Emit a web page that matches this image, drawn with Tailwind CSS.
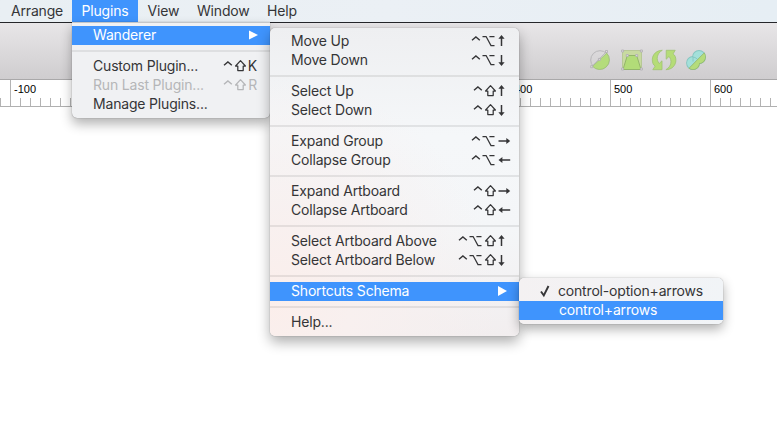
<!DOCTYPE html>
<html lang="en">
<head>
<meta charset="utf-8">
<title>Plugins menu</title>
<script src="https://cdn.jsdelivr.net/npm/@tailwindcss/browser@4"></script>
</head>
<body class="w-[777px] h-[423px] overflow-hidden bg-white relative font-[Inter,sans-serif] text-[14px] tracking-[-0.18px] leading-[17px] text-[#353537]">
<svg width="0" height="0" class="absolute">
  <defs>
    <g id="ctrl" fill="none" stroke="currentColor" stroke-width="1.4"><path d="M1 8.300 4.900 4.900 8.800 8.300"/></g>
    <g id="opt" fill="none" stroke="currentColor" stroke-width="1.25"><path d="M.5 4.500H4.100L9 13.500H12.500M7.400 4.500H12.500"/></g>
    <g id="shift" fill="none" stroke="currentColor" stroke-width="1.25" stroke-linejoin="round"><path d="M5.500 3.700.6 9H2.800V13.500H8.200V9H10.400Z"/></g>
    <g id="up"><path d="M3.500 14V5" fill="none" stroke="currentColor" stroke-width="1.500"/><path d="M3.500 3 6.600 6.800H.4Z" fill="currentColor"/></g>
    <g id="down"><path d="M3.500 4V13" fill="none" stroke="currentColor" stroke-width="1.500"/><path d="M3.500 15 6.600 11.200H.4Z" fill="currentColor"/></g>
    <g id="right"><path d="M0 9H10" fill="none" stroke="currentColor" stroke-width="1.500"/><path d="M11.700 9 7.800 6V12Z" fill="currentColor"/></g>
    <g id="left"><path d="M1.500 9H11.700" fill="none" stroke="currentColor" stroke-width="1.500"/><path d="M0 9 3.900 6V12Z" fill="currentColor"/></g>
  </defs>
</svg>

<div class="flex flex-col">
  <header class="h-[23px] flex bg-linear-to-r from-[#e9eff3] via-[#ebf0f5] to-[#e6eef4] border-b border-[#25262a] leading-[22px]">
    <span class="w-[72px] pl-[11px]">Arrange</span>
    <span class="w-[66px] pl-[9.5px] bg-[#3f94fd] text-white">Plugins</span>
    <span class="w-[59px] pl-[9.5px]">View</span>
    <span class="w-[70px]">Window</span>
    <span>Help</span>
  </header>
  <div class="h-[57px] bg-linear-to-b from-[#e8e6e8] to-[#cfcdcf] border-b border-[#a9a8a9] flex items-start pl-[589px] pt-[26px] gap-[9px]">
    <!-- Edit -->
    <svg width="22" height="22" viewBox="0 0 22 22"><circle cx="11" cy="11" r="9.300" fill="none" stroke="#b8b7ba"/><path d="M3.500 17.300 17.800 4.200A9.500 9.500 0 1 1 3.500 17.300Z" fill="#b4dc7b" stroke="#9cc072" stroke-width=".8"/><path d="M2.700 17.700 17.300 2.800" stroke="#b4b3b8" stroke-width=".9"/><g fill="#e2e0e2" stroke="#aeacb1" stroke-width=".8"><path d="M1.700 16.700h2v2h-2zM16.500 1.500h2v2h-2zM9.400 9.400h2v2h-2z"/></g></svg>
    <!-- Transform -->
    <svg width="24" height="22" viewBox="0 0 24 22"><path d="M2.500 1.500H21.500V20.500H2.500Z" fill="#c8daa0" stroke="#b4c692" stroke-width=".9"/><path d="M3 20.500 7.300 6.500H16.700L21 20.500Z" fill="#b2dc78" stroke="#8fb167" stroke-width=".9"/><g fill="#e2e0e2" stroke="#aeacb1" stroke-width=".8"><path d="M1.600 1h2v2h-2zM20.400 1h2v2h-2zM1.600 19h2v2h-2zM20.400 19h2v2h-2zM6.300 5.500h2v2h-2zM15.700 5.500h2v2h-2z"/></g></svg>
    <!-- Rotate -->
    <svg width="26" height="22" viewBox="0 0 26 22" class="-ml-[2px]" fill="#b5dc77" stroke="#a0c272" stroke-width=".8" stroke-linejoin="round"><path d="M11.300 1.300C5.500 1.300 1.300 5.500 1.300 10.800c0 3 1 5 2.800 6.400L1.800 20.700H11V11.800L8.200 14.500C5 11 5.500 4.500 11.300 1.300Z"/><path d="M14.900 20.700C20.700 20.700 24.900 16.500 24.900 11.200c0-3-1-5-2.800-6.400L24.200 1.300H15.200V10.200L18 7.500C21.200 11 20.700 17.500 14.900 20.700Z"/></svg>
    <!-- Mask -->
    <svg width="22" height="22" viewBox="0 0 22 22" class="-ml-[1px]">
      <clipPath id="lower"><path d="M2 21.300 22 1V22H2Z"/></clipPath>
      <g fill="#84c6c1"><circle cx="14" cy="8" r="6.900"/><circle cx="8" cy="14" r="6.900"/></g>
      <g fill="#a3e0da"><circle cx="14" cy="8" r="6"/><circle cx="8" cy="14" r="6"/></g>
      <path d="M7.600 8A6.500 6.500 0 0 1 14 14.400" fill="none" stroke="#84c6c1" stroke-width=".9"/>
      <path d="M8 12.500V7.700" fill="none" stroke="#84c6c1" stroke-width=".9"/>
      <g clip-path="url(#lower)"><g fill="#94b86c"><circle cx="14" cy="8" r="6.900"/><circle cx="8" cy="14" r="6.900"/></g><g fill="#b4dc7b"><circle cx="14" cy="8" r="6.200"/><circle cx="8" cy="14" r="6.200"/></g></g>
      <path d="M4 19.300 19.300 3.800" stroke="#94b87c" stroke-width=".8"/>
    </svg>
  </div>
  <div class="h-[27px] border-b border-[#b0b0b0] bg-white overflow-hidden font-['Liberation_Sans',sans-serif] text-[11px] tracking-normal leading-[19px] text-black">
    <svg width="777" height="26" class="block" shape-rendering="crispEdges">
      <defs>
        <pattern id="minor" width="10" height="26" patternUnits="userSpaceOnUse"><path d="M0 18h1v8H0z" fill="#b3b3b3"/></pattern>
        <pattern id="major" x="10" width="100" height="26" patternUnits="userSpaceOnUse"><path d="M0 0h1v26H0z" fill="#b3b3b3"/></pattern>
      </defs>
      <rect width="777" height="26" fill="url(#minor)"/><rect width="777" height="26" fill="url(#major)"/>
      <g fill="#000"><text x="14" y="13">-100</text><text x="514" y="13">400</text><text x="614" y="13">500</text><text x="714" y="13">600</text></g>
    </svg>
  </div>
</div>

<!-- Plugins menu -->
<nav class="absolute left-[72px] top-[22px] w-[198px] h-[96px] pt-[4px] rounded-b-[5px] bg-[#f0f1f3] border-t border-[#c4c6c9] shadow-[0_0_1px_rgba(0,0,0,.5),0_6px_12px_rgba(0,0,0,.3)]">
  <div class="-mt-px h-[19px] pb-[2px] bg-[#3f94fd] text-white flex items-center pl-[21px] pr-[12px] justify-between"><span>Wanderer</span><svg width="9" height="10"><path d="M0 .5 9 5 0 9.500Z" fill="#fff"/></svg></div>
  <div class="h-[12px] pt-[5px]"><div class="h-[2px] bg-[#dedfe1]"></div></div>
  <div class="h-[19px] flex pl-[21px] pr-[13px] justify-between"><span>Custom Plugin...</span><span class="flex"><svg width="25" height="19"><use href="#ctrl"/><use href="#shift" x="12"/></svg>K</span></div>
  <div class="h-[19px] flex pl-[21px] pr-[13px] justify-between text-[#b5b6b8]"><span>Run Last Plugin...</span><span class="flex"><svg width="25" height="19"><use href="#ctrl"/><use href="#shift" x="12"/></svg>R</span></div>
  <div class="h-[19px] flex pl-[21px]"><span>Manage Plugins...</span></div>
</nav>

<!-- Wanderer submenu -->
<nav class="absolute left-[270px] top-[28px] w-[249px] h-[308px] py-[4px] rounded-[5px] bg-[radial-gradient(circle_at_0_90%,#fbeeeb_0,#f8f0ef_80px,transparent_230px),linear-gradient(#eeeff1,#f5f7f9_35%,#f4f6f8_65%,#f2eeef)] shadow-[0_0_1px_rgba(0,0,0,.55),0_6px_13px_rgba(0,0,0,.32)]">
  <div class="h-[19px] flex pl-[21px] justify-between"><span>Move Up</span><svg width="48" height="19"><use href="#ctrl"/><use href="#opt" x="11"/><use href="#up" x="27"/></svg></div>
  <div class="h-[19px] flex pl-[21px] justify-between"><span>Move Down</span><svg width="48" height="19"><use href="#ctrl"/><use href="#opt" x="11"/><use href="#down" x="27"/></svg></div>
  <div class="h-[12px] pt-[5px]"><div class="h-[2px] bg-black/8"></div></div>
  <div class="h-[19px] flex pl-[21px] justify-between"><span>Select Up</span><svg width="48" height="19"><use href="#ctrl" x="2"/><use href="#shift" x="14"/><use href="#up" x="27"/></svg></div>
  <div class="h-[19px] flex pl-[21px] justify-between"><span>Select Down</span><svg width="48" height="19"><use href="#ctrl" x="2"/><use href="#shift" x="14"/><use href="#down" x="27"/></svg></div>
  <div class="h-[12px] pt-[5px]"><div class="h-[2px] bg-black/8"></div></div>
  <div class="h-[19px] flex pl-[21px] justify-between"><span>Expand Group</span><svg width="48" height="19"><use href="#ctrl"/><use href="#opt" x="11"/><use href="#right" x="27.500"/></svg></div>
  <div class="h-[19px] flex pl-[21px] justify-between"><span>Collapse Group</span><svg width="48" height="19"><use href="#ctrl"/><use href="#opt" x="11"/><use href="#left" x="27.500"/></svg></div>
  <div class="h-[12px] pt-[5px]"><div class="h-[2px] bg-black/8"></div></div>
  <div class="h-[19px] flex pl-[21px] justify-between"><span>Expand Artboard</span><svg width="48" height="19"><use href="#ctrl" x="2"/><use href="#shift" x="14"/><use href="#right" x="27.500"/></svg></div>
  <div class="h-[19px] flex pl-[21px] justify-between"><span>Collapse Artboard</span><svg width="48" height="19"><use href="#ctrl" x="2"/><use href="#shift" x="14"/><use href="#left" x="27.500"/></svg></div>
  <div class="h-[12px] pt-[5px]"><div class="h-[2px] bg-black/8"></div></div>
  <div class="h-[19px] flex pl-[21px] justify-between"><span>Select Artboard Above</span><svg width="61" height="19"><use href="#ctrl"/><use href="#opt" x="11"/><use href="#shift" x="27"/><use href="#up" x="40"/></svg></div>
  <div class="h-[19px] flex pl-[21px] justify-between"><span>Select Artboard Below</span><svg width="61" height="19"><use href="#ctrl"/><use href="#opt" x="11"/><use href="#shift" x="27"/><use href="#down" x="40"/></svg></div>
  <div class="h-[12px] pt-[5px]"><div class="h-[2px] bg-black/8"></div></div>
  <div class="h-[19px] pb-[2px] bg-[#3f94fd] text-white flex items-center pl-[21px] pr-[12px] justify-between"><span>Shortcuts Schema</span><svg width="9" height="10"><path d="M0 0 9 5 0 10Z" fill="#fff"/></svg></div>
  <div class="h-[12px] pt-[5px]"><div class="h-[2px] bg-black/8"></div></div>
  <div class="h-[19px] flex pl-[21px]"><span>Help...</span></div>
</nav>

<!-- Shortcuts schema submenu -->
<nav class="absolute left-[519px] top-[278px] w-[204px] h-[46px] py-[4px] rounded-[5px] bg-linear-to-r from-[#f4f1f2] to-[#f1f4f7] shadow-[0_0_1px_rgba(0,0,0,.55),0_5px_12px_rgba(0,0,0,.32)]">
  <div class="h-[19px] flex pl-[21px]"><svg width="18" height="19"><path d="M1 9.500 3.800 13.500 8.500 4" fill="none" stroke="currentColor" stroke-width="1.900"/></svg><span>control-option+arrows</span></div>
  <div class="h-[19px] flex pl-[40px] bg-[#3f94fd] text-white"><span>control+arrows</span></div>
</nav>
</body>
</html>
